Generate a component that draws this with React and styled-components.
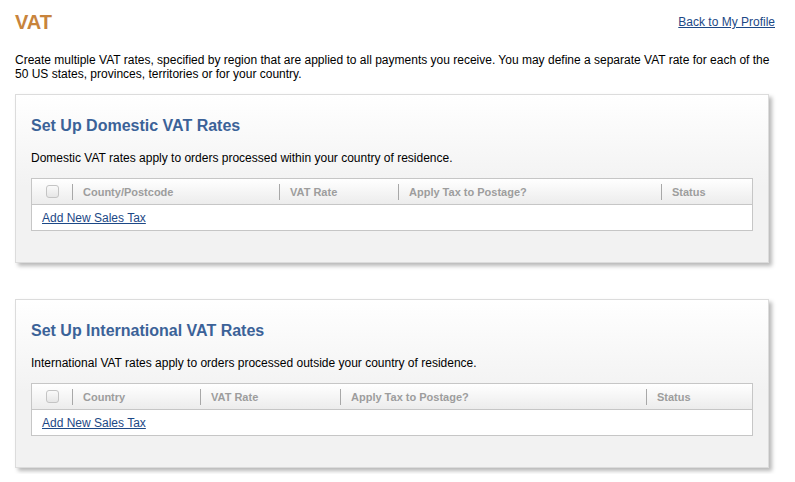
import React from "react"
import styled, { createGlobalStyle } from "styled-components"

const GlobalStyle = createGlobalStyle`
  body {
    margin: 0;
    background: #fff;
    font-family: Arial, "Liberation Sans", sans-serif;
    color: #000;
  }
`

const Page = styled.div`
  width: 760px;
  padding: 10px 15px 6px 15px;
`

const Header = styled.div`
  display: flex;
  justify-content: space-between;
  align-items: center;
  height: 24px;
`

const Title = styled.h1`
  margin: 0;
  font-size: 20px;
  line-height: 24px;
  font-weight: 700;
  color: #c8843c;
`

const Link = styled.a`
  font-size: 12px;
  color: #1c4886;
  text-decoration: underline;
  cursor: pointer;
`

const Intro = styled.p`
  margin: 19px 0 13px 0;
  font-size: 12px;
  line-height: 14px;
`

const Cards = styled.div`
  display: flex;
  flex-direction: column;
  gap: 36px;
`

const Card = styled.section`
  width: 722px;
  padding: 21px 15px 31px 15px;
  border: 1px solid #dcdcdc;
  background: linear-gradient(#ffffff, #f2f2f2 55%);
  box-shadow: 3px 3px 4px rgba(0, 0, 0, 0.28);
`

const CardTitle = styled.h2`
  margin: 0;
  font-size: 16px;
  line-height: 19px;
  font-weight: 700;
  color: #3b6298;
`

const CardText = styled.p`
  margin: 16px 0 13px 0;
  font-size: 12px;
  line-height: 14px;
`

const Table = styled.div`
  border: 1px solid #c6c6c6;
  background: #fff;
`

const HeadRow = styled.div`
  display: flex;
  align-items: center;
  height: 25px;
  border-bottom: 1px solid #c6c6c6;
  background: linear-gradient(#ffffff, #ececec);
`

const CheckCell = styled.div`
  width: 40px;
  padding-left: 14px;
  box-sizing: border-box;
  display: flex;
  align-items: center;
`

const Checkbox = styled.span`
  width: 11px;
  height: 11px;
  border: 1px solid #c4c4c4;
  border-radius: 3px;
  background: linear-gradient(#fafafa, #e6e6e6);
`

const HeadCell = styled.div`
  width: ${(p) => p.$w}px;
  flex: ${(p) => (p.$grow ? 1 : "none")};
  height: 16px;
  box-sizing: border-box;
  border-left: 1px solid #a8a8a8;
  padding-left: 10px;
  font-size: 11px;
  line-height: 16px;
  font-weight: 700;
  color: #9d9d9d;
`

const BodyRow = styled.div`
  height: 25px;
  padding-left: 10px;
  display: flex;
  align-items: center;
`

const sections = [
  {
    title: "Set Up Domestic VAT Rates",
    text: "Domestic VAT rates apply to orders processed within your country of residence.",
    cols: [
      ["County/Postcode", 207],
      ["VAT Rate", 119],
      ["Apply Tax to Postage?", 263],
      ["Status", 0],
    ],
  },
  {
    title: "Set Up International VAT Rates",
    text: "International VAT rates apply to orders processed outside your country of residence.",
    cols: [
      ["Country", 128],
      ["VAT Rate", 140],
      ["Apply Tax to Postage?", 306],
      ["Status", 0],
    ],
  },
]

function RatesCard({ section }) {
  return (
    <Card>
      <CardTitle>{section.title}</CardTitle>
      <CardText>{section.text}</CardText>
      <Table>
        <HeadRow>
          <CheckCell>
            <Checkbox />
          </CheckCell>
          {section.cols.map(([label, w]) => (
            <HeadCell key={label} $w={w} $grow={w === 0}>
              {label}
            </HeadCell>
          ))}
        </HeadRow>
        <BodyRow>
          <Link>Add New Sales Tax</Link>
        </BodyRow>
      </Table>
    </Card>
  )
}

export default function App() {
  return (
    <>
      <GlobalStyle />
      <Page>
        <Header>
          <Title>VAT</Title>
          <Link>Back to My Profile</Link>
        </Header>
        <Intro>
          Create multiple VAT rates, specified by region that are applied to all payments you
          receive. You may define a separate VAT rate for each of the 50 US states, provinces,
          territories or for your country.
        </Intro>
        <Cards>
          {sections.map((s) => (
            <RatesCard key={s.title} section={s} />
          ))}
        </Cards>
      </Page>
    </>
  )
}
